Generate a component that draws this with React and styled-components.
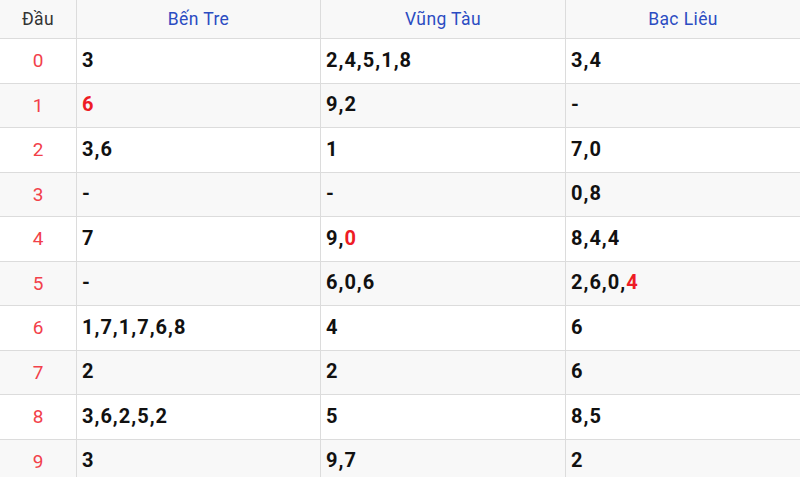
import React from "react";
import styled, { createGlobalStyle } from "styled-components";

const Global = createGlobalStyle`
  html, body { margin: 0; padding: 0; background: #ffffff; }
  body { font-family: Roboto, "Noto Sans", "Liberation Sans", sans-serif; overflow: hidden; }
`;

const Table = styled.div`
  display: grid;
  grid-template-columns: 77px 244px 245px 1fr;
  width: 800px;
`;

const HeadCell = styled.div`
  height: 39px;
  box-sizing: border-box;
  background: #f8f8f8;
  border-bottom: 1px solid #dcdcdc;
  border-right: ${(p) => (p.$last ? "none" : "1px solid #dcdcdc")};
  display: flex;
  align-items: center;
  justify-content: center;
  font-size: 17.5px;
  letter-spacing: 0.4px;
  color: ${(p) => (p.$plain ? "#333333" : "#2b4cc2")};
  padding-bottom: 1px;
`;

const Cell = styled.div`
  height: 44.5px;
  box-sizing: border-box;
  background: ${(p) => (p.$odd ? "#f8f8f8" : "#ffffff")};
  border-bottom: 1px solid #dcdcdc;
  border-right: ${(p) => (p.$last ? "none" : "1px solid #dcdcdc")};
  display: flex;
  align-items: center;
  padding-left: 5px;
  padding-bottom: 2px;
  font-size: 20px;
  font-weight: 700;
  letter-spacing: 1px;
  color: #111111;
`;

const HeadNum = styled(Cell)`
  justify-content: center;
  padding-left: 0;
  padding-bottom: 0;
  font-weight: 400;
  font-size: 19px;
  letter-spacing: 0;
  color: #f2414a;
`;

const Hot = styled.span`
  color: #ee1c25;
`;

const rows = [
  ["3", "2,4,5,1,8", "3,4"],
  [{ hot: "6" }, "9,2", "-"],
  ["3,6", "1", "7,0"],
  ["-", "-", "0,8"],
  ["7", ["9,", { hot: "0" }], "8,4,4"],
  ["-", "6,0,6", ["2,6,0,", { hot: "4" }]],
  ["1,7,1,7,6,8", "4", "6"],
  ["2", "2", "6"],
  ["3,6,2,5,2", "5", "8,5"],
  ["3", "9,7", "2"],
];

function Value({ v }) {
  if (Array.isArray(v)) return v.map((p, i) => <Value key={i} v={p} />);
  if (typeof v === "object") return <Hot>{v.hot}</Hot>;
  return <>{v}</>;
}

export default function App() {
  return (
    <>
      <Global />
      <Table>
        <HeadCell $plain>Đầu</HeadCell>
        <HeadCell>Bến Tre</HeadCell>
        <HeadCell>Vũng Tàu</HeadCell>
        <HeadCell $last>Bạc Liêu</HeadCell>
        {rows.map((r, i) => (
          <React.Fragment key={i}>
            <HeadNum $odd={i % 2 === 1}>{i}</HeadNum>
            {r.map((v, j) => (
              <Cell key={j} $odd={i % 2 === 1} $last={j === 2}>
                <Value v={v} />
              </Cell>
            ))}
          </React.Fragment>
        ))}
      </Table>
    </>
  );
}
